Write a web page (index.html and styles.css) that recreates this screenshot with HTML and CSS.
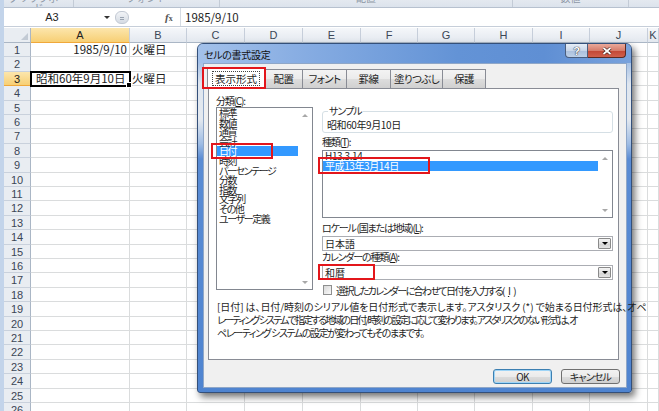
FILE: index.html
```html
<!DOCTYPE html>
<html lang="ja">
<head>
    <meta charset="UTF-8">
    <title>セルの書式設定</title>
    <link rel="stylesheet" href="styles.css">
</head>
<body>
    <div class="app">
        <div class="ribbon">
            <div class="group g1"><span>クリップボード</span></div>
            <div class="group g2"><span>フォント</span></div>
            <div class="group g3"><span>配置</span></div>
            <div class="group g4"><span>数値</span></div>
            <div class="group g5"></div>
        </div>
        <div class="formula-bar">
            <div class="name-box">A3</div>
            <div class="name-drop"></div>
            <div class="grip"><span></span></div>
            <div class="fx"><i>f</i><small>x</small></div>
            <div class="formula">1985/9/10</div>
        </div>
        <div class="sheet" id="sheet"></div>
    </div>

    <div class="dialog">
        <div class="titlebar">
            <span class="title">セルの書式設定</span>
            <div class="caption-btns">
                <span class="btn-help">?</span>
                <span class="btn-close">
                    <svg width="10" height="8" viewBox="0 0 10 8"><path d="M1.5 1 L8.5 7 M8.5 1 L1.5 7" stroke="#3a1510" stroke-width="3"/><path d="M1.5 1 L8.5 7 M8.5 1 L1.5 7" stroke="#fff" stroke-width="1.8"/></svg>
                </span>
            </div>
        </div>
        <div class="dialog-body">
            <div class="tabs">
                <span class="tab active"><span class="focus">表示形式</span></span>
                <span class="tab t-align">配置</span>
                <span class="tab t-font">フォント</span>
                <span class="tab t-border">罫線</span>
                <span class="tab t-fill">塗りつぶし</span>
                <span class="tab t-protect">保護</span>
            </div>
            <div class="panel">
                <div class="panel-cols">
                    <div class="col-left">
                        <div class="label">分類(<u>C</u>):</div>
                        <div class="listbox cat">
                            <ul>
                                <li>標準</li>
                                <li>数値</li>
                                <li>通貨</li>
                                <li>会計</li>
                                <li class="selected">日付</li>
                                <li>時刻</li>
                                <li>パーセンテージ</li>
                                <li>分数</li>
                                <li>指数</li>
                                <li>文字列</li>
                                <li>その他</li>
                                <li>ユーザー定義</li>
                            </ul>
                            <div class="vscroll"><span class="up"></span><span class="down"></span></div>
                        </div>
                    </div>
                    <div class="col-right">
                        <fieldset class="sample">
                            <legend>サンプル</legend>
                            昭和60年9月10日
                        </fieldset>
                        <div class="label">種類(<u>T</u>):</div>
                        <div class="listbox types">
                            <ul>
                                <li>H13.3.14</li>
                                <li class="selected">平成13年3月14日</li>
                            </ul>
                            <div class="vscroll"><span class="up"></span><span class="down"></span></div>
                        </div>
                        <div class="label">ロケール (国または地域)(<u>L</u>):</div>
                        <div class="combo locale">日本語<span class="drop"></span></div>
                        <div class="label">カレンダーの種類(<u>A</u>):</div>
                        <div class="combo calendar">和暦<span class="drop"></span></div>
                        <div class="check"><span class="box"></span>選択したカレンダーに合わせて日付を入力する(<u>I</u>)</div>
                    </div>
                </div>
                <p class="desc">
                    <span class="l1">[日付] は、日付/時刻のシリアル値を日付形式で表示します。アスタリスク (*) で始まる日付形式は、オペ</span>
                    <span class="l2">レーティング システムで指定する地域の日付/時刻の設定に応じて変わります。アスタリスクのない形式は、オ</span>
                    <span class="l3">ペレーティング システムの設定が変わってもそのままです。</span>
                </p>
            </div>
            <div class="buttons">
                <button class="ok">OK</button>
                <button>キャンセル</button>
            </div>
        </div>
    </div>

    <!-- 赤枠の注釈 -->
    <div class="mark mark-tab"></div>
    <div class="mark mark-cat"></div>
    <div class="mark mark-type"></div>
    <div class="mark mark-cal"></div>

    <script>
        // シートのセルを生成
        const cols = ['A','B','C','D','E','F','G','H','I','J','K'];
        const data = {
            A1: { text: '1985/9/10', cls: 'num' },
            B1: { text: '火曜日' },
            A3: { text: '昭和60年9月10日', cls: 'active' },
            B3: { text: '火曜日' }
        };
        let html = '<div class="corner"><span></span></div>';
        cols.forEach(c => {
            html += `<div class="col-head${c === 'A' ? ' sel' : ''}">${c}</div>`;
        });
        for (let r = 1; r <= 27; r++) {
            html += `<div class="row-head${r === 3 ? ' sel' : ''}">${r}</div>`;
            cols.forEach(c => {
                const d = data[c + r];
                html += d ? `<div class="cell ${d.cls || ''}">${d.text}</div>` : '<div class="cell"></div>';
            });
        }
        document.getElementById('sheet').innerHTML = html;
    </script>
</body>
</html>
```

FILE: styles.css
```css
body, html {
    margin: 0;
    padding: 0;
}
body {
    width: 659px;
    height: 411px;
    overflow: hidden;
    position: relative;
    background: #fff;
    font-family: "Noto Sans CJK JP", "Liberation Sans", sans-serif;
    color: #1e1e1e;
}
.app {
    height: 411px;
    overflow: hidden;
    box-sizing: border-box;
    border-left: 4px solid #c3d4ea;
}

/* リボン下端 */
.ribbon {
    height: 8px;
    box-sizing: border-box;
    display: flex;
    overflow: hidden;
    background: linear-gradient(#e4e9f0, #dce3ec);
    border-bottom: 1px solid #b7c1cf;
}
.ribbon .group {
    border-right: 1px solid #c3cbd6;
    text-align: center;
    font-size: 10px;
    line-height: 10px;
    color: #8d97a6;
}
.ribbon .group span {
    display: block;
    margin-top: -7px;
}
.ribbon .g1 { width: 69px; }
.ribbon .g2 { width: 145px; }
.ribbon .g3 { width: 292px; }
.ribbon .g4 { width: 115px; }
.ribbon .g5 { flex: 1; border-right: none; }

/* 数式バー */
.formula-bar {
    height: 19px;
    box-sizing: border-box;
    display: flex;
    align-items: center;
    background: #fff;
    border-bottom: 1px solid #c6ced9;
    margin-bottom: 1px;
}
.formula-bar .name-box {
    width: 96px;
    text-align: center;
    font-family: "Liberation Sans", sans-serif;
    font-size: 11px;
}
.formula-bar .name-drop {
    width: 0;
    height: 0;
    margin-left: 4px;
    border-left: 3px solid transparent;
    border-right: 3px solid transparent;
    border-top: 3px solid #333;
}
.formula-bar .grip {
    width: 12px;
    height: 11px;
    margin-left: 5px;
    border-radius: 6px;
    background: linear-gradient(#f2f4f7, #d5dbe3);
    border: 1px solid #c2c9d3;
    display: flex;
    align-items: center;
    justify-content: center;
}
.formula-bar .grip span {
    width: 4px;
    height: 1px;
    background: #9aa4b1;
    box-shadow: 0 2px 0 #9aa4b1;
}
.formula-bar .fx {
    margin-left: 36px;
    width: 15px;
    font-family: "Liberation Serif", serif;
    font-size: 11px;
    font-weight: bold;
    color: #555;
}
.formula-bar .fx small {
    font-size: 8px;
}
.formula-bar .formula {
    flex: 1;
    align-self: stretch;
    border-left: 1px solid #d5dbe3;
    padding-left: 4px;
    font-size: 11.5px;
    line-height: 18px;
}

/* シート */
.sheet {
    display: grid;
    grid-template-columns: 27px 99px 57px 58px 58px 58px 57px 57px 58px 57px 58px 1fr;
    grid-template-rows: 15px;
    grid-auto-rows: 14px 15px 14px 15px 14px;
}
.sheet .cell {
    border-right: 1px solid #dadcdd;
    border-bottom: 1px solid #dadcdd;
    font-size: 11.5px;
    line-height: 13px;
    padding: 0 2px;
    white-space: nowrap;
}
.sheet .cell.num {
    text-align: right;
}
.sheet .cell.active {
    position: relative;
    z-index: 1;
    outline: 2px solid #000;
    outline-offset: -1px;
    padding-left: 5px;
}
.sheet .cell.active::after {
    content: '';
    position: absolute;
    right: -3px;
    bottom: -3px;
    width: 4px;
    height: 4px;
    background: #000;
    border: 1px solid #fff;
}
.sheet .corner {
    background: #e9edf2;
    border-right: 1px solid #aab6c5;
    border-bottom: 1px solid #aab6c5;
    position: relative;
}
.sheet .corner span {
    position: absolute;
    right: 2px;
    bottom: 2px;
    border-left: 7px solid transparent;
    border-bottom: 7px solid #c2cad4;
}
.sheet .col-head {
    background: linear-gradient(#f5f7fa, #e3e8ef);
    border-right: 1px solid #c6ceda;
    border-bottom: 1px solid #aab6c5;
    text-align: center;
    font-family: "Liberation Sans", sans-serif;
    font-size: 11px;
    line-height: 14px;
    color: #3b4656;
}
.sheet .row-head {
    background: #e9edf2;
    border-right: 1px solid #aab6c5;
    border-bottom: 1px solid #c9d1dc;
    text-align: center;
    font-family: "Liberation Sans", sans-serif;
    font-size: 11px;
    line-height: 14px;
    color: #3b4656;
}
.sheet .sel {
    background: linear-gradient(#fce6ad, #f7cf74);
    border-bottom-color: #f0a83a;
    color: #222;
}
.sheet .row-head.sel {
    border-right-color: #f0a83a;
}

/* ダイアログ */
.dialog {
    position: absolute;
    left: 197px;
    top: 43px;
    width: 435px;
    height: 350px;
    box-sizing: border-box;
    border: 1px solid #34507a;
    border-radius: 6px 6px 3px 3px;
    padding: 0 4px 4px 5px;
    display: flex;
    flex-direction: column;
    background: linear-gradient(#7fa4da 0px, #a9c3e6 20px, #dfe6ef 40px, #e4e9ef 75px, #9ebce4 100px, #5a8cd4 115px, #4f84d0 100%);
    box-shadow: 3px 4px 7px rgba(0, 0, 0, 0.55);
}
.titlebar {
    height: 19px;
    display: flex;
    align-items: flex-start;
    margin: 0 -4px 0 -5px;
    padding: 0 5px 0 6px;
    border-radius: 5px 5px 0 0;
    background: linear-gradient(90deg, #a3c1ea 0%, #86ace2 25%, #6393d6 60%, #5f8fd4 80%, #79a2dc 100%);
}
.titlebar .title {
    font-size: 10px;
    line-height: 19px;
    padding-top: 1px;
    color: #111;
    letter-spacing: -0.3px;
    font-feature-settings: "palt";
}
.caption-btns {
    margin-left: auto;
    display: flex;
}
.caption-btns span {
    height: 14px;
    box-sizing: border-box;
    display: flex;
    align-items: center;
    justify-content: center;
}
.btn-help {
    width: 23px;
    border: 1px solid #4a5e7e;
    border-top: none;
    border-radius: 0 0 0 4px;
    background: linear-gradient(#e6edf6, #c8d6e9 50%, #aabfdc 51%, #bdd0e8);
    font-family: "Liberation Sans", sans-serif;
    font-weight: bold;
    font-size: 11px;
    color: #fff;
    text-shadow: 0 0 1px #223, 0 0 1px #223;
}
.btn-close {
    width: 38px;
    border: 1px solid #5b2a22;
    border-top: none;
    border-left: none;
    border-radius: 0 0 4px 0;
    background: linear-gradient(#eaa99a, #d67d6c 50%, #c24634 51%, #d0604c);
}
.dialog-body {
    flex: 1;
    background: #f0f0f0;
    border: 1px solid #8fa7c8;
    padding: 3px 7px 0 4px;
    font-size: 10px;
    font-feature-settings: "palt";
}

/* タブ */
.tabs {
    display: flex;
    align-items: flex-end;
    height: 22px;
    margin: 0 0 -1px -1px;
    position: relative;
    z-index: 1;
}
.tab {
    height: 19px;
    box-sizing: border-box;
    margin-bottom: 1px;
    border: 1px solid #898c95;
    border-bottom: none;
    border-left: none;
    background: linear-gradient(#f3f3f3, #ebebeb 50%, #dddddd 51%, #d0d0d0);
    text-align: center;
    font-size: 10.5px;
    line-height: 17px;
    letter-spacing: -0.6px;
}
.tab.active {
    width: 58px;
    height: 22px;
    margin-bottom: 0;
    border-left: 1px solid #898c95;
    background: #fff;
    padding-top: 2px;
    letter-spacing: 0;
}
.tab .focus {
    display: inline-block;
    border: 1px dotted #444;
    padding: 0 2px;
    line-height: 13px;
}
.t-align { width: 38px; }
.t-font { width: 44px; }
.t-border { width: 44px; }
.t-fill { width: 52px; }
.t-protect { width: 43px; }

.panel {
    height: 272px;
    box-sizing: border-box;
    background: #fff;
    border: 1px solid #898c95;
    padding: 6px 5px 0 7px;
}
.panel-cols {
    display: flex;
    gap: 9px;
}
.col-left {
    width: 97px;
}
.col-right {
    flex: 1;
}
.label {
    height: 12px;
    line-height: 12px;
    letter-spacing: -1.2px;
    white-space: nowrap;
}
.listbox {
    display: flex;
    box-sizing: border-box;
    border: 1px solid #828790;
    background: #fff;
}
.listbox ul {
    flex: 1;
    list-style: none;
    margin: 0;
    padding: 0;
}
.listbox li {
    padding-left: 2px;
    white-space: nowrap;
}
.listbox li.selected {
    background: #3399ff;
    color: #fff;
}
.listbox.cat {
    height: 183px;
    letter-spacing: -1.4px;
}
.listbox.cat li {
    line-height: 9.6px;
    height: 9.6px;
}
.listbox.types {
    height: 68px;
    margin-top: 2px;
    letter-spacing: -0.4px;
}
.listbox.types li {
    line-height: 10px;
}
.vscroll {
    width: 14px;
    display: flex;
    flex-direction: column;
    justify-content: space-between;
    align-items: center;
    padding: 6px 0 5px;
}
.vscroll span {
    width: 0;
    height: 0;
    border-left: 3px solid transparent;
    border-right: 3px solid transparent;
}
.vscroll .up {
    border-bottom: 3px solid #a8a8a8;
}
.vscroll .down {
    border-top: 3px solid #a8a8a8;
}

.sample {
    margin: 10px 0 0;
    padding: 2px 4px 1px;
    border: 1px solid #d5dfe5;
    border-radius: 3px;
    line-height: 12px;
    letter-spacing: -0.4px;
}
.sample legend {
    padding: 0 1px;
    margin-left: 1px;
    line-height: 12px;
    letter-spacing: -1px;
}
.sample + .label {
    margin-top: 3px;
}
.types + .label {
    margin-top: 4px;
}
.combo {
    height: 15px;
    box-sizing: border-box;
    margin-top: 2px;
    border: 1px solid #abadb3;
    display: flex;
    align-items: center;
    padding-left: 2px;
}
.combo .drop {
    margin-left: auto;
    margin-right: 1px;
    width: 13px;
    height: 11px;
    box-sizing: border-box;
    border: 1px solid #8a8a8a;
    border-radius: 1px;
    background: linear-gradient(#f4f4f4, #e0e0e0 50%, #d2d2d2 51%, #e2e2e2);
    display: flex;
    align-items: center;
    justify-content: center;
}
.combo .drop::after {
    content: '';
    border-left: 3px solid transparent;
    border-right: 3px solid transparent;
    border-top: 3px solid #000;
}
.check {
    margin-top: 4px;
    height: 12px;
    display: flex;
    align-items: center;
    gap: 4px;
    padding-left: 1px;
    white-space: nowrap;
    letter-spacing: -1.6px;
}
.check .box {
    width: 9px;
    height: 10px;
    box-sizing: border-box;
    border: 1px solid #8e8f8f;
    background: linear-gradient(135deg, #d8d8d8, #fafafa);
}
.desc {
    margin: 4px 0 0 1px;
    line-height: 13px;
    white-space: nowrap;
}
.desc span {
    display: block;
}
.desc .l1 {
    letter-spacing: -0.08px;
}
.desc .l2 {
    letter-spacing: -1.9px;
}
.desc .l3 {
    letter-spacing: -1.4px;
}

.buttons {
    display: flex;
    justify-content: flex-end;
    gap: 9px;
    margin: 9px -1px 0 0;
}
.buttons button {
    width: 59px;
    height: 15px;
    padding: 0;
    border: 1px solid #707070;
    border-radius: 3px;
    background: linear-gradient(#f2f2f2, #ebebeb 50%, #dddddd 51%, #cfcfcf);
    font-family: "Noto Sans CJK JP", sans-serif;
    font-size: 10px;
    line-height: 13px;
    color: #1e1e1e;
    letter-spacing: -0.8px;
    font-feature-settings: "palt";
}
.buttons .ok {
    border-color: #3c7fb1;
    box-shadow: inset 0 0 0 1px #9fd5f7;
}

/* 赤枠 */
.mark {
    position: absolute;
    box-sizing: border-box;
    border: 2px solid #e3161b;
    z-index: 5;
}
.mark-tab { left: 202px; top: 67px; width: 64px; height: 22px; }
.mark-cat { left: 211px; top: 143px; width: 62px; height: 16px; }
.mark-type { left: 318px; top: 157px; width: 112px; height: 17px; }
.mark-cal { left: 318px; top: 264px; width: 57px; height: 16px; }
```
